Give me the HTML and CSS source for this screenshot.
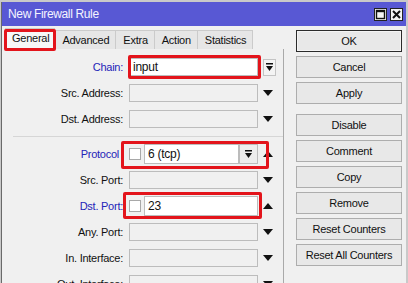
FILE: index.html
```html
<!DOCTYPE html>
<html lang="en">
<head>
  <meta charset="UTF-8" />
  <meta name="viewport" content="width=device-width, initial-scale=1" />
  <title>New Firewall Rule</title>
  <link rel="stylesheet" href="styles.css">
</head>
<body>
  <div class="window">
    <div class="titlebar">
      <span class="title">New Firewall Rule</span>
      <span class="tb-btns">
        <span class="tb-btn"><svg width="11" height="11" viewBox="0 0 11 11"><rect x="1.5" y="1.5" width="8" height="8" fill="none" stroke="#111" stroke-width="1.4"/><line x1="1.5" y1="2.5" x2="9.5" y2="2.5" stroke="#111" stroke-width="1.4"/></svg></span>
        <span class="tb-btn"><svg width="11" height="11" viewBox="0 0 11 11"><path d="M2 2 L9 9 M9 2 L2 9" stroke="#111" stroke-width="2"/></svg></span>
      </span>
    </div>

    <div class="main">
      <div class="left">
        <div class="tabs">
          <span class="tab active">General<span class="mark mark-tab"></span></span>
          <span class="tab">Advanced</span>
          <span class="tab">Extra</span>
          <span class="tab">Action</span>
          <span class="tab">Statistics</span>
        </div>

        <div class="panel">
          <div class="row">
            <span class="key blue">Chain:</span>
            <span class="ctl">
              <span class="field filled">input</span>
              <span class="mark mark-chain"></span>
            </span>
            <span class="drop-btn"><svg width="9" height="9" viewBox="0 0 9 9"><rect x="1" y="0" width="7" height="1.5" fill="#111"/><path d="M1 3 H8 L4.5 8 Z" fill="#111"/></svg></span>
          </div>
          <div class="row">
            <span class="key">Src. Address:</span>
            <span class="ctl"><span class="field"></span></span>
            <span class="arrow"><svg width="10" height="6" viewBox="0 0 10 6"><path d="M0 0 H10 L5 6 Z" fill="#111"/></svg></span>
          </div>
          <div class="row">
            <span class="key">Dst. Address:</span>
            <span class="ctl"><span class="field"></span></span>
            <span class="arrow"><svg width="10" height="6" viewBox="0 0 10 6"><path d="M0 0 H10 L5 6 Z" fill="#111"/></svg></span>
          </div>

          <div class="sep"></div>

          <div class="row">
            <span class="key blue nocolon">Protocol</span>
            <span class="ctl group">
              <span class="check"></span>
              <span class="field filled grow">6 (tcp)</span>
              <span class="combo-btn"><svg width="9" height="9" viewBox="0 0 9 9"><rect x="1" y="0" width="7" height="1.5" fill="#111"/><path d="M1 3 H8 L4.5 8 Z" fill="#111"/></svg></span>
              <span class="mark mark-proto"></span>
            </span>
            <span class="arrow"><svg width="10" height="6" viewBox="0 0 10 6"><path d="M0 6 H10 L5 0 Z" fill="#111"/></svg></span>
          </div>
          <div class="row">
            <span class="key">Src. Port:</span>
            <span class="ctl"><span class="field"></span></span>
            <span class="arrow"><svg width="10" height="6" viewBox="0 0 10 6"><path d="M0 0 H10 L5 6 Z" fill="#111"/></svg></span>
          </div>
          <div class="row">
            <span class="key blue">Dst. Port:</span>
            <span class="ctl group">
              <span class="check"></span>
              <span class="field filled grow">23</span>
              <span class="mark mark-port"></span>
            </span>
            <span class="arrow"><svg width="10" height="6" viewBox="0 0 10 6"><path d="M0 6 H10 L5 0 Z" fill="#111"/></svg></span>
          </div>
          <div class="row">
            <span class="key">Any. Port:</span>
            <span class="ctl"><span class="field"></span></span>
            <span class="arrow"><svg width="10" height="6" viewBox="0 0 10 6"><path d="M0 0 H10 L5 6 Z" fill="#111"/></svg></span>
          </div>
          <div class="row">
            <span class="key">In. Interface:</span>
            <span class="ctl"><span class="field"></span></span>
            <span class="arrow"><svg width="10" height="6" viewBox="0 0 10 6"><path d="M0 0 H10 L5 6 Z" fill="#111"/></svg></span>
          </div>
          <div class="row">
            <span class="key">Out. Interface:</span>
            <span class="ctl"><span class="field"></span></span>
            <span class="arrow"><svg width="10" height="6" viewBox="0 0 10 6"><path d="M0 0 H10 L5 6 Z" fill="#111"/></svg></span>
          </div>
        </div>
      </div>

      <div class="buttons">
        <button class="btn default">OK</button>
        <button class="btn">Cancel</button>
        <button class="btn">Apply</button>
        <button class="btn spaced">Disable</button>
        <button class="btn">Comment</button>
        <button class="btn">Copy</button>
        <button class="btn">Remove</button>
        <button class="btn">Reset Counters</button>
        <button class="btn">Reset All Counters</button>
      </div>
    </div>
  </div>
</body>
</html>
```

FILE: styles.css
```css
body {
  margin: 0;
  width: 408px;
  height: 283px;
  overflow: hidden;
  background: #c9c9c9;
  font-family: "Liberation Sans", Arial, sans-serif;
  font-size: 11px;
  letter-spacing: -0.25px;
  color: #111;
}
.window {
  margin: 2px 2px 0 1px;
  height: 281px;
  border-left: 1px solid #6a6a6a;
  background: #f0f0f0;
  display: flex;
  flex-direction: column;
}
.titlebar {
  height: 24px;
  flex: none;
  background: #5858d4;
  display: flex;
  align-items: center;
  justify-content: space-between;
  padding: 0 3px 0 6px;
}
.title {
  color: #f4f4ff;
  font-size: 12px;
  letter-spacing: -0.35px;
}
.tb-btns {
  display: flex;
  gap: 3px;
  margin-top: 1px;
}
.tb-btn {
  width: 11px;
  height: 11px;
  border: 1px solid #222;
  background: #f4f4f4;
  display: flex;
  align-items: center;
  justify-content: center;
}
.main {
  flex: 1;
  display: flex;
}
.left {
  width: 282px;
  display: flex;
  flex-direction: column;
}
.tabs {
  height: 23px;
  display: flex;
  align-items: flex-end;
  padding-left: 4px;
}
.tab {
  position: relative;
  height: 19px;
  line-height: 18px;
  padding: 0 6px 0 7px;
  background: #e6e6e6;
  border: 1px solid #cbcbcb;
  border-bottom: none;
  margin-left: -1px;
  box-sizing: border-box;
}
.tab.active {
  height: 21px;
  background: #f7f7f7;
  padding: 0 5px 0 6px;
  z-index: 1;
}
.panel {
  flex: 1;
  border-right: 1px solid #a9a9a9;
  padding-top: 5px;
}
.row {
  display: grid;
  grid-template-columns: 121px 129px 13px;
  column-gap: 6px;
  height: 26px;
  align-items: center;
}
.row .arrow,
.row .drop-btn {
  margin-left: -1px;
}
.key {
  text-align: right;
  white-space: nowrap;
}
.key.blue {
  color: #2424b8;
}
.key.nocolon {
  padding-right: 4px;
}
.ctl {
  position: relative;
  display: flex;
  align-items: center;
  height: 18px;
}
.ctl.group {
  height: 20px;
  gap: 3px;
}
.field {
  box-sizing: border-box;
  width: 100%;
  height: 18px;
  border: 1px solid #bcbcbc;
  background: #f0f0f0;
  padding-left: 3px;
  line-height: 16px;
  font-size: 12px;
}
.group .field {
  height: 20px;
  line-height: 18px;
}
.field.filled {
  background: #fff;
}
.field.grow {
  flex: 1;
  width: auto;
}
.check {
  flex: none;
  width: 12px;
  height: 12px;
  box-sizing: border-box;
  border: 1px solid #a8a8a8;
  background: #fff;
}
.combo-btn {
  flex: none;
  width: 19px;
  height: 20px;
  box-sizing: border-box;
  border: 1px solid #bcbcbc;
  background: #ededed;
  margin-left: -3px;
  display: flex;
  align-items: center;
  justify-content: center;
}
.drop-btn {
  width: 13px;
  height: 17px;
  box-sizing: border-box;
  border: 1px solid #c4c4c4;
  background: #f4f4f4;
  display: flex;
  align-items: center;
  justify-content: center;
}
.arrow {
  display: flex;
  align-items: center;
}
.sep {
  height: 1px;
  background: #d6d6d6;
  margin: 4px 0 4px 11px;
}
.mark {
  position: absolute;
  border: 3px solid #e3141b;
  border-radius: 2px;
  pointer-events: none;
}
.mark-tab {
  left: -2px;
  right: -2px;
  top: 0;
  bottom: -2px;
}
.mark-chain {
  left: -1px;
  right: -3px;
  top: -3px;
  bottom: -3px;
}
.mark-proto {
  left: -8px;
  right: -11px;
  top: -3px;
  bottom: -5px;
}
.mark-port {
  left: -6px;
  right: -4px;
  top: -4px;
  bottom: -3px;
}
.buttons {
  width: 106px;
  margin-left: 12px;
  padding-top: 4px;
  display: flex;
  flex-direction: column;
  gap: 4px;
}
.btn {
  height: 22px;
  box-sizing: border-box;
  border: 1px solid #adadad;
  background: #e8e8e8;
  font-family: inherit;
  font-size: 11px;
  letter-spacing: -0.25px;
  color: #111;
  padding: 0;
}
.btn.default {
  border: 1px solid #2b2b2b;
  box-shadow: inset 0 0 0 1px #f4f4f4;
}
.btn.spaced {
  margin-top: 6px;
}
```
